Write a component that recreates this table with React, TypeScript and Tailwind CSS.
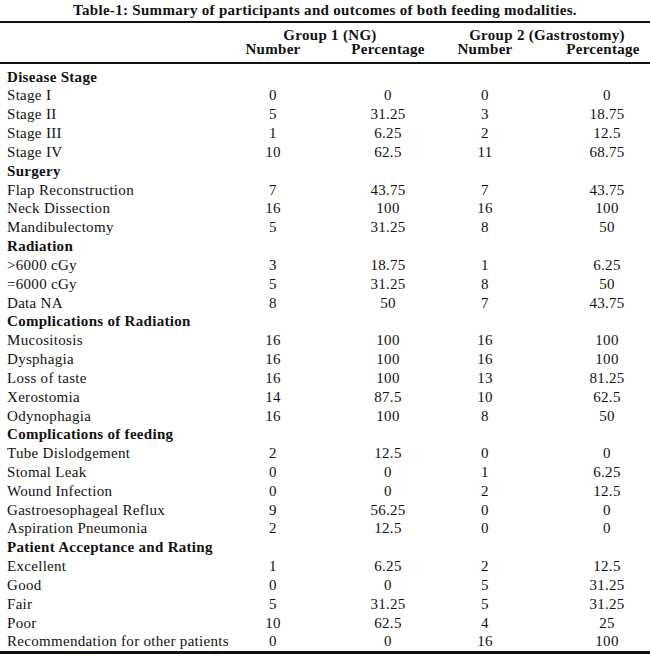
type Row = { label: string; bold?: boolean; v?: [string, string, string, string] };

const rows: Row[] = [
  { label: "Disease Stage", bold: true },
  { label: "Stage I", v: ["0", "0", "0", "0"] },
  { label: "Stage II", v: ["5", "31.25", "3", "18.75"] },
  { label: "Stage III", v: ["1", "6.25", "2", "12.5"] },
  { label: "Stage IV", v: ["10", "62.5", "11", "68.75"] },
  { label: "Surgery", bold: true },
  { label: "Flap Reconstruction", v: ["7", "43.75", "7", "43.75"] },
  { label: "Neck Dissection", v: ["16", "100", "16", "100"] },
  { label: "Mandibulectomy", v: ["5", "31.25", "8", "50"] },
  { label: "Radiation", bold: true },
  { label: ">6000 cGy", v: ["3", "18.75", "1", "6.25"] },
  { label: "=6000 cGy", v: ["5", "31.25", "8", "50"] },
  { label: "Data NA", v: ["8", "50", "7", "43.75"] },
  { label: "Complications of Radiation", bold: true },
  { label: "Mucositosis", v: ["16", "100", "16", "100"] },
  { label: "Dysphagia", v: ["16", "100", "16", "100"] },
  { label: "Loss of taste", v: ["16", "100", "13", "81.25"] },
  { label: "Xerostomia", v: ["14", "87.5", "10", "62.5"] },
  { label: "Odynophagia", v: ["16", "100", "8", "50"] },
  { label: "Complications of feeding", bold: true },
  { label: "Tube Dislodgement", v: ["2", "12.5", "0", "0"] },
  { label: "Stomal Leak", v: ["0", "0", "1", "6.25"] },
  { label: "Wound Infection", v: ["0", "0", "2", "12.5"] },
  { label: "Gastroesophageal Reflux", v: ["9", "56.25", "0", "0"] },
  { label: "Aspiration Pneumonia", v: ["2", "12.5", "0", "0"] },
  { label: "Patient Acceptance and Rating", bold: true },
  { label: "Excellent", v: ["1", "6.25", "2", "12.5"] },
  { label: "Good", v: ["0", "0", "5", "31.25"] },
  { label: "Fair", v: ["5", "31.25", "5", "31.25"] },
  { label: "Poor", v: ["10", "62.5", "4", "25"] },
  { label: "Recommendation for other patients", v: ["0", "0", "16", "100"] },
];

export default function App() {
  return (
    <div
      className="w-[650px] h-[665px] bg-white text-[#111] text-[15px] tracking-[0.3px]"
      style={{ fontFamily: '"Liberation Serif", "Times New Roman", serif' }}
    >
      <div className="pt-[1px] h-[21px] text-center font-bold text-[15px] leading-[18px]">
        Table-1: Summary of participants and outcomes of both feeding modalities.
      </div>
      <table className="table-fixed w-[650px] border-collapse">
        <colgroup>
          <col className="w-[226px]" />
          <col className="w-[94px]" />
          <col className="w-[136px]" />
          <col className="w-[58px]" />
          <col className="w-[136px]" />
        </colgroup>
        <thead className="font-bold">
          <tr className="border-t-2 border-[#111]">
            <th className="pt-[5px]" />
            <th colSpan={2} className="pt-[5px] pr-[22px] leading-[14px] font-bold">
              Group 1 (NG)
            </th>
            <th colSpan={2} className="pt-[5px] pr-[12px] leading-[14px] font-bold">
              Group 2 (Gastrostomy)
            </th>
          </tr>
          <tr className="border-b-2 border-[#111]">
            <th className="pb-[5px]" />
            <th className="pb-[5px] leading-[15px] font-bold">Number</th>
            <th className="pb-[5px] leading-[15px] font-bold">Percentage</th>
            <th className="pb-[5px] leading-[15px] font-bold">Number</th>
            <th className="pb-[5px] pl-[42px] leading-[15px] font-bold">Percentage</th>
          </tr>
        </thead>
        <tbody className="border-b-[3px] border-[#111]">
          <tr className="h-[4.6px]">
            <td colSpan={5} className="p-0" />
          </tr>
          {rows.map((r) => (
            <tr key={r.label} className="h-[18.83px] leading-[18.83px]">
              <td className={`pl-[7px] whitespace-nowrap ${r.bold ? "font-bold" : ""}`}>
                {r.label}
              </td>
              <td className="text-center">{r.v?.[0]}</td>
              <td className="text-center">{r.v?.[1]}</td>
              <td className="text-center">{r.v?.[2]}</td>
              <td className="text-center pl-[50px]">{r.v?.[3]}</td>
            </tr>
          ))}
        </tbody>
      </table>
    </div>
  );
}
